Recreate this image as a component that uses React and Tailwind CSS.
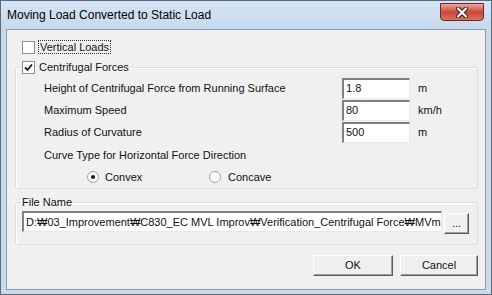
import React from 'react'

const Check = ({ checked }) => (
    <span className="w-[13px] h-[13px] shrink-0 border border-[#8e8f8f] bg-white flex items-center justify-center">
        {checked && (
            <svg width="9" height="9" viewBox="0 0 9 9">
                <path d="M1 4.5 L3.5 7 L8 1.5" fill="none" stroke="#1b1b1b" strokeWidth="1.8" />
            </svg>
        )}
    </span>
)

const Radio = ({ checked }) => (
    <span className="w-[12px] h-[12px] shrink-0 rounded-full border border-[#a0a0a0] bg-white flex items-center justify-center">
        {checked && <span className="w-[4px] h-[4px] rounded-full bg-[#1b1b1b]" />}
    </span>
)

const Field = ({ label, value, unit }) => (
    <div className="flex items-center h-[22px]">
        <span className="w-[298px]">{label}</span>
        <div className="w-[68px] h-[21px] bg-white border-t-2 border-l-2 border-t-[#808080] border-l-[#808080] border-r border-b border-r-[#e8e8e8] border-b-[#e8e8e8] flex items-center pl-[2px]">
            {value}
        </div>
        <span className="ml-[8px]">{unit}</span>
    </div>
)

const Button = ({ children, className }) => (
    <button className={"h-[21px] bg-[#f0f0f0] border border-t-[#ffffff] border-l-[#ffffff] border-r-[#5a5a5a] border-b-[#5a5a5a] shadow-[inset_-1px_-1px_0_#a0a0a0] flex items-center justify-center " + className}>
        {children}
    </button>
)

export default function App() {
    return (
        <div className="w-[492px] h-[295px] bg-[#c9daec] border border-[#5b6b7c] flex flex-col font-['Liberation_Sans',Tahoma,sans-serif] text-[11px] leading-[13px] text-[#111]">
            {/* Title bar */}
            <div className="h-[28px] flex items-start justify-between pl-[6px] pr-[7px] bg-gradient-to-b from-[#d6e5f4] to-[#c6d9ed]">
                <span className="mt-[7px] text-[12px] leading-[14px] text-black">Moving Load Converted to Static Load</span>
                <div className="mt-[2px] w-[44px] h-[18px] rounded-b-[4px] border border-[#6d2a25] bg-gradient-to-b from-[#e8a89d] via-[#c8473a] to-[#d8705e] flex items-center justify-center">
                    <svg width="14" height="11" viewBox="0 0 14 11">
                        <path d="M3 1.5 L11 9.5 M11 1.5 L3 9.5" stroke="#3a1a16" strokeWidth="4" strokeLinecap="round" />
                        <path d="M3 1.5 L11 9.5 M11 1.5 L3 9.5" stroke="#ffffff" strokeWidth="2.2" strokeLinecap="round" />
                    </svg>
                </div>
            </div>

            {/* Client area */}
            <div className="flex-1 mx-[5px] mb-[4px] bg-[#f0f0f0] border border-[#8b9cb0] flex flex-col pl-[8px] pr-[7px] pt-[10px]">
                <div className="flex items-center gap-[3px] pl-[7px] h-[14px]">
                    <Check />
                    <span className="border border-dotted border-[#333] px-[1px] leading-[12px]">Vertical Loads</span>
                </div>

                <fieldset className="mt-[7px] border border-[#d5dfe5] shadow-[inset_1px_1px_0_#ffffff] rounded-[2px]">
                    <legend className="ml-[5px] px-[1px] flex items-center gap-[4px] h-[13px]">
                        <Check checked />
                        <span>Centrifugal Forces</span>
                    </legend>
                    <div className="flex flex-col pt-[3px] pl-[28px]">
                        <Field label="Height of Centrifugal Force from Running Surface" value="1.8" unit="m" />
                        <Field label="Maximum Speed" value="80" unit="km/h" />
                        <Field label="Radius of Curvature" value="500" unit="m" />
                        <div className="h-[22px] flex items-center mt-[1px]">Curve Type for Horizontal Force Direction</div>
                        <div className="h-[22px] flex items-center">
                            <div className="flex items-center gap-[6px] ml-[43px] w-[122px]">
                                <Radio checked />
                                <span>Convex</span>
                            </div>
                            <div className="flex items-center gap-[7px]">
                                <Radio />
                                <span>Concave</span>
                            </div>
                        </div>
                    </div>
                </fieldset>

                <fieldset className="mt-[7px] border border-[#d5dfe5] shadow-[inset_1px_1px_0_#ffffff] pb-[10px] rounded-[2px]">
                    <legend className="ml-[5px] px-[1px] h-[13px]">File Name</legend>
                    <div className="flex items-start mt-[2px] pl-[6px]">
                        <div className="w-[420px] h-[21px] bg-white border-t-2 border-l-2 border-t-[#808080] border-l-[#808080] border-r border-b border-r-[#e8e8e8] border-b-[#e8e8e8] flex items-center pl-[2px] overflow-hidden whitespace-nowrap">
                            D:₩03_Improvement₩C830_EC MVL Improv₩Verification_Centrifugal Force₩MVmax
                        </div>
                        <Button className="w-[25px] ml-[2px] mt-[2px]">...</Button>
                    </div>
                </fieldset>

                <div className="flex justify-end gap-[7px] mt-[10px]">
                    <Button className="w-[80px]">OK</Button>
                    <Button className="w-[78px]">Cancel</Button>
                </div>
            </div>
        </div>
    )
}
